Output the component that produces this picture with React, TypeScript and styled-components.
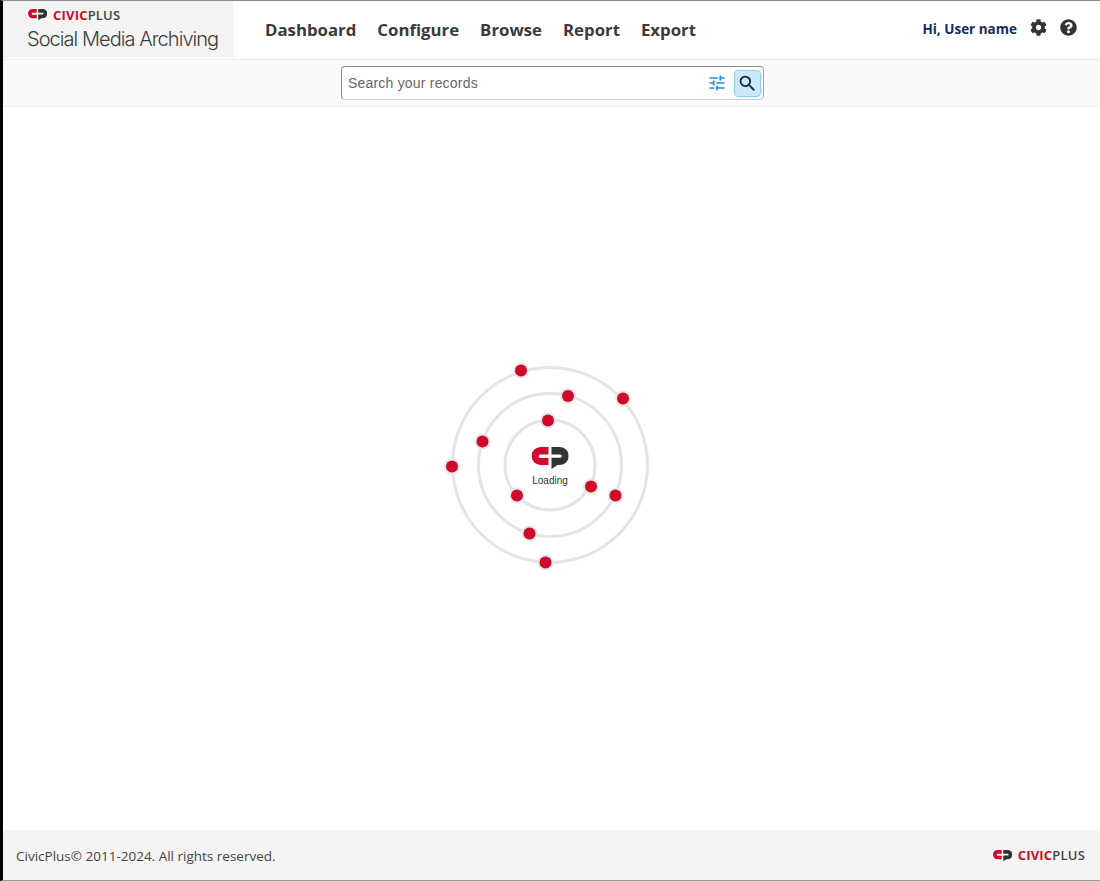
import React from "react";
import styled, { createGlobalStyle } from "styled-components";
import { FaCog, FaQuestionCircle } from "react-icons/fa";
import { MdSearch, MdTune } from "react-icons/md";

const Global = createGlobalStyle`
  html, body { margin: 0; padding: 0; background: #fff; }
  #root { height: 881px; }
`;

const Page = styled.div`
  height: 881px;
  box-sizing: border-box;
  border-left: 3px solid #000;
  border-top: 1px solid #8a8a8a;
  border-bottom: 1px solid #9a9a9a;
  display: flex;
  flex-direction: column;
  font-family: "Open Sans", sans-serif;
  overflow: hidden;
`;

const Header = styled.header`
  height: 57px;
  flex: none;
  display: flex;
  align-items: stretch;
  background: #fff;
`;

const Brand = styled.div`
  width: 231px;
  flex: none;
  box-sizing: border-box;
  background: #f4f4f4;
  padding: 8px 0 0 24px;
  display: flex;
  flex-direction: column;
`;

const BrandLogo = styled.div`
  display: flex;
  align-items: center;
  gap: 6px;
  height: 12px;
  margin-left: 1px;
`;

const Wordmark = styled.span`
  font-family: "Open Sans", sans-serif;
  font-size: 13px;
  line-height: 12px;
  font-weight: 600;
  color: #444;
  letter-spacing: 0.2px;
  white-space: nowrap;
  margin-top: -1px;
`;

const WordRed = styled.span`
  color: #cf0a2c;
  font-weight: 700;
  letter-spacing: 0.2px;
`;

const Product = styled.div`
  margin-top: 4px;
  font-family: Inter, sans-serif;
  font-weight: 300;
  font-size: 20px;
  line-height: 28px;
  letter-spacing: -0.95px;
  color: #3c3c3c;
  white-space: nowrap;
`;

const Nav = styled.nav`
  display: flex;
  align-items: center;
  gap: 21px;
  margin-left: 31px;
  flex: 1;
`;

const NavLink = styled.a`
  font-size: 16.8px;
  font-weight: 700;
  color: #3a3a3a;
`;

const UserArea = styled.div`
  display: flex;
  align-items: center;
  padding-right: 23px;
`;

const Greeting = styled.span`
  font-size: 13.5px;
  font-weight: 700;
  color: #132d5e;
  margin: -1px 13px 0 0;
`;

const HeadIcon = styled.span`
  display: flex;
  color: #333;
  font-size: 17px;
  margin-top: -5px;
  & + & {
    margin-left: 13px;
  }
`;

const SearchBar = styled.div`
  height: 48px;
  flex: none;
  box-sizing: border-box;
  margin-top: 1px;
  background: #fafafa;
  border-top: 1px solid #ececec;
  border-bottom: 1px solid #eef1f1;
  display: flex;
  justify-content: center;
  padding: 6px 0 0 2px;
`;

const SearchBox = styled.div`
  width: 423px;
  height: 34px;
  box-sizing: border-box;
  background: #fff;
  border: 1px solid #8c8c8c;
  border-bottom-color: #d0d0d0;
  border-right-color: #a5a5a5;
  border-radius: 4px;
  display: flex;
  align-items: center;
  padding: 0 2px 0 6px;
`;

const Placeholder = styled.span`
  flex: 1;
  font-family: "Liberation Sans", sans-serif;
  font-size: 14px;
  letter-spacing: 0.2px;
  color: #666;
`;

const Tune = styled.span`
  display: flex;
  color: #1a8fdd;
  font-size: 20px;
  margin-right: 7px;
`;

const SearchButton = styled.button`
  width: 27px;
  height: 27px;
  box-sizing: border-box;
  padding: 0;
  background: #cbe8fc;
  border: 1px solid #8ccff5;
  border-radius: 4px;
  color: #10243c;
  font-size: 21px;
  display: flex;
  align-items: center;
  justify-content: center;
`;

const Main = styled.main`
  flex: 1;
  display: flex;
  align-items: center;
  justify-content: center;
  background: #fff;
`;

const Orbit = styled.div`
  position: relative;
  width: 220px;
  height: 220px;
  margin: 0 0 0 -3px;
  top: -4px;
`;

const LoadingLabel = styled.span`
  position: absolute;
  left: 0;
  right: 0;
  top: 120.5px;
  text-align: center;
  font-family: "Liberation Sans", sans-serif;
  font-size: 10px;
  line-height: 12px;
  color: #333;
`;

const Footer = styled.footer`
  height: 50px;
  flex: none;
  background: #f4f4f4;
  display: flex;
  align-items: center;
  justify-content: space-between;
  padding: 0 15px 0 13px;
`;

const Copy = styled.span`
  font-size: 13.5px;
  color: #444;
  margin-top: 1px;
`;

const FooterLogo = styled(BrandLogo)`
  margin: 1px 0 0 0;
`;

const Mark = ({ width }: { width: number }) => (
  <svg width={width} height={(width * 22) / 37} viewBox="0 0 37 22" aria-hidden="true">
    <path fill="#cf0a2c" d="M17 0H9a9 9 0 0 0 0 18h8v-7H8.5a1.8 1.8 0 0 1 0-3.5H17z" />
    <path
      fill="#333"
      d="M20 0h8.5a9 9 0 0 1 0 18H26l-6 4V10.8h8.5a1.7 1.7 0 0 0 0-3.4H20z"
    />
  </svg>
);

const RED = "#cf0a2c";
const RING = "#e4e4e4";
const dots: [number, number][] = [
  [81, 15.5], [183, 43.5], [12, 111.5], [105.5, 207.5],
  [128, 41], [42.5, 86.5], [175.5, 140.5], [89.5, 178.5],
  [108, 65.5], [151, 131.5], [77, 140.5],
];

const Spinner = () => (
  <svg width="220" height="220" viewBox="0 0 220 220" aria-hidden="true">
    {[45, 71.5, 97.5].map((r) => (
      <circle key={r} cx="110" cy="110" r={r} fill="none" stroke={RING} strokeWidth="3" />
    ))}
    {dots.map(([x, y]) => (
      <g key={`${x}-${y}`}>
        <circle cx={x} cy={y} r="8" fill="#e6e6e6" />
        <circle cx={x} cy={y} r="6" fill={RED} />
      </g>
    ))}
    <g transform="translate(91.5 92)">
      <Mark width={37} />
    </g>
  </svg>
);

const Logo = ({ as: Wrap }: { as: typeof BrandLogo }) => (
  <Wrap>
    <Mark width={19} />
    <Wordmark>
      <WordRed>CIVIC</WordRed>PLUS
    </Wordmark>
  </Wrap>
);

export default function App() {
  return (
    <Page>
      <Global />
      <Header>
        <Brand>
          <Logo as={BrandLogo} />
          <Product>Social Media Archiving</Product>
        </Brand>
        <Nav>
          {["Dashboard", "Configure", "Browse", "Report", "Export"].map((n) => (
            <NavLink key={n}>{n}</NavLink>
          ))}
        </Nav>
        <UserArea>
          <Greeting>Hi, User name</Greeting>
          <HeadIcon><FaCog /></HeadIcon>
          <HeadIcon><FaQuestionCircle /></HeadIcon>
        </UserArea>
      </Header>
      <SearchBar>
        <SearchBox>
          <Placeholder>Search your records</Placeholder>
          <Tune><MdTune /></Tune>
          <SearchButton><MdSearch /></SearchButton>
        </SearchBox>
      </SearchBar>
      <Main>
        <Orbit>
          <Spinner />
          <LoadingLabel>Loading</LoadingLabel>
        </Orbit>
      </Main>
      <Footer>
        <Copy>CivicPlus© 2011-2024. All rights reserved.</Copy>
        <Logo as={FooterLogo} />
      </Footer>
    </Page>
  );
}
